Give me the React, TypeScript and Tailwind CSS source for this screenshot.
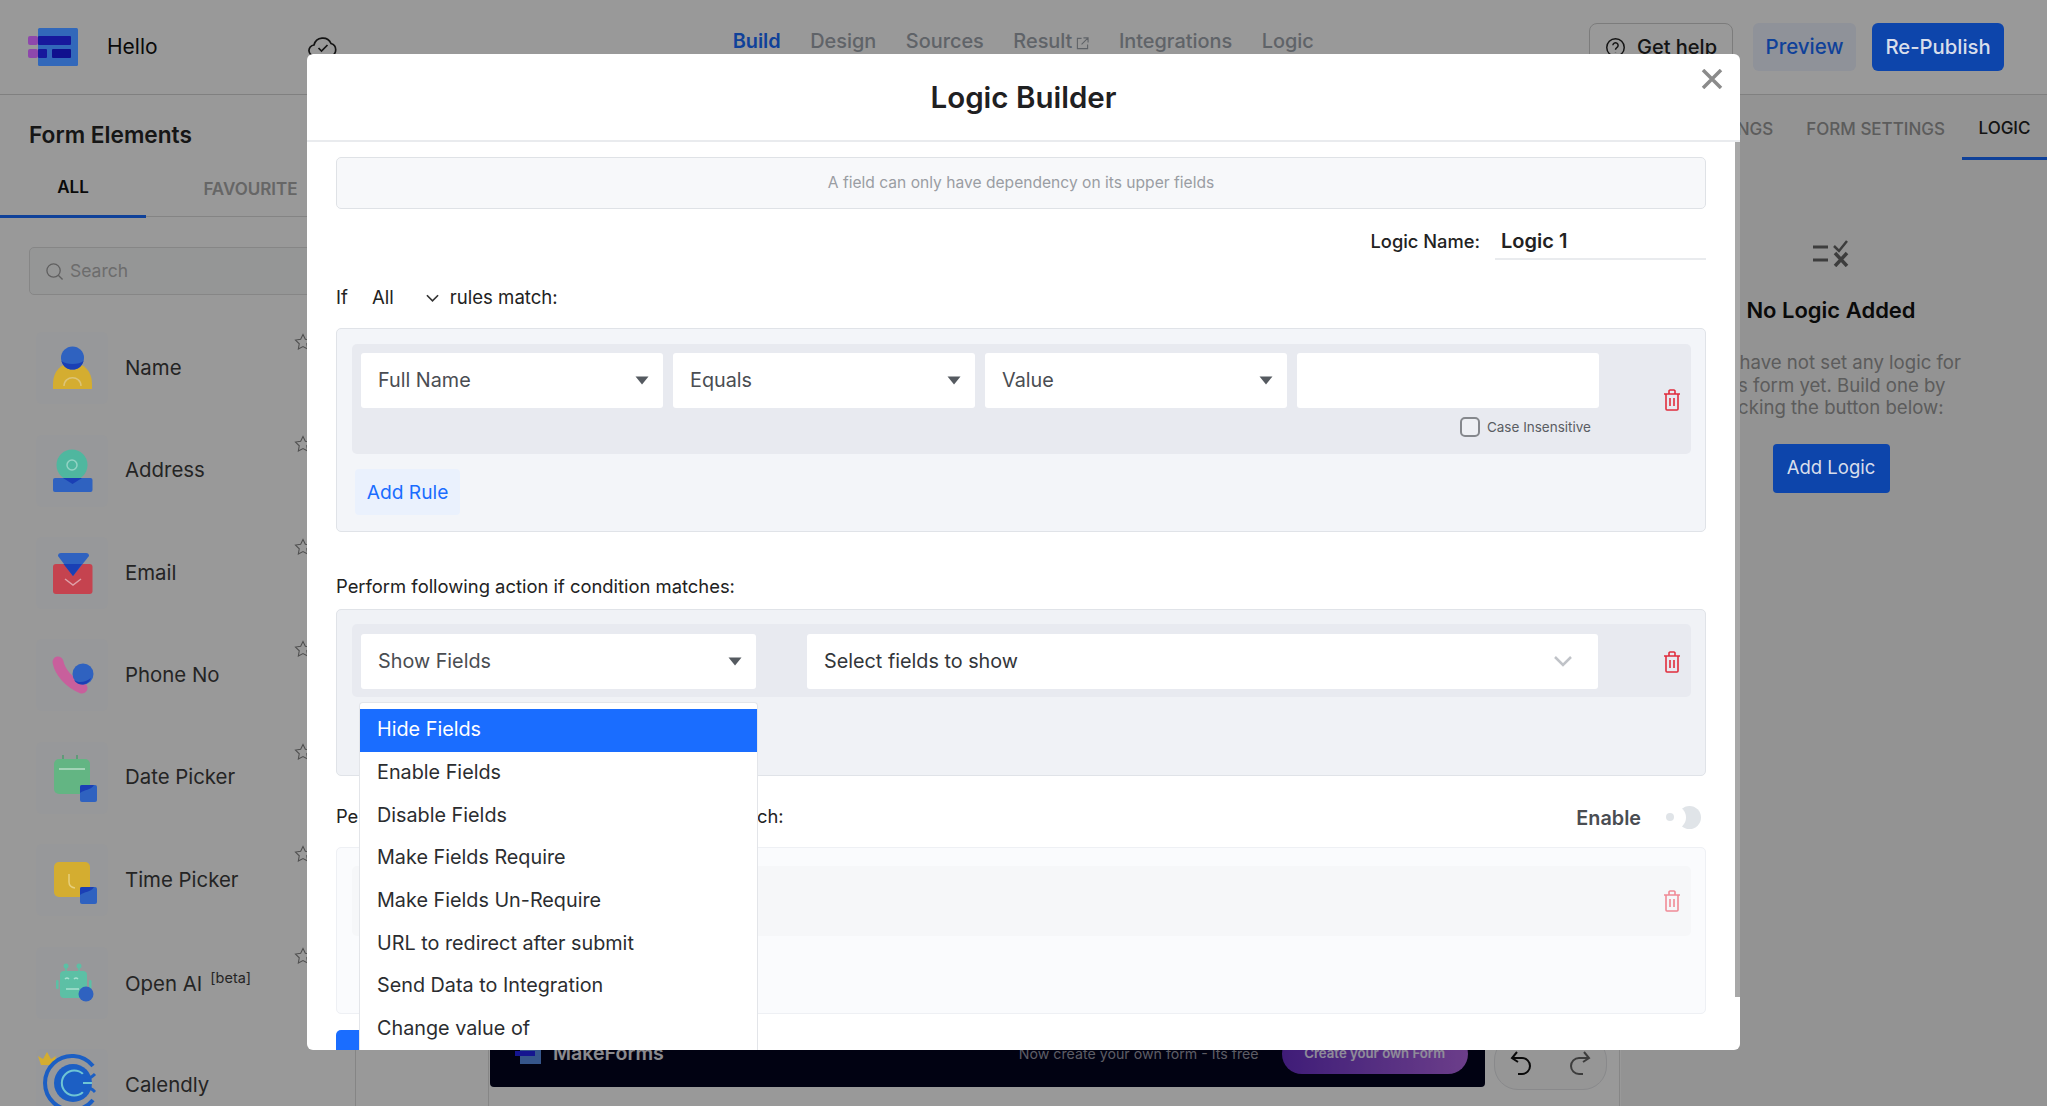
import React from "react";

const Trash = ({ className = "" }: { className?: string }) => (
  <svg viewBox="0 0 18 22" width="18" height="22" fill="none" stroke="currentColor" strokeWidth="1.6" className={className}>
    <path d="M1 5h16M6 5V2.5A1.2 1.2 0 0 1 7.2 1h3.6A1.2 1.2 0 0 1 12 2.500V5M3 5v15a1 1 0 0 0 1 1h10a1 1 0 0 0 1-1V5M7 9v8M11 9v8" />
  </svg>
);

const Caret = () => (
  <svg viewBox="0 0 14 9" width="14" height="9" className="shrink-0 text-[#555a60]" fill="currentColor">
    <path d="M0.5 0.5h13L7 8.500z" />
  </svg>
);

const Select = ({ label, className = "" }: { label: string; className?: string }) => (
  <div className={`h-[55px] bg-white rounded-[3px] flex items-center justify-between pl-[17px] pr-[14px] text-[19.800px] text-[#4a4d52] ${className}`}>
    <span>{label}</span>
    <Caret />
  </div>
);

const Star = () => (
  <svg viewBox="0 0 24 24" width="20" height="20" fill="none" stroke="#858585" strokeWidth="1.300" className="absolute left-[293px] top-[15px]">
    <path d="M12 3l2.800 5.800 6.200.9-4.500 4.400 1.100 6.300L12 17.400l-5.600 3 1.100-6.300L3 9.700l6.200-.9z" />
  </svg>
);

const B = "#2f62c0";
const D = "#1a3fb5";

const iconName = (
  <>
    <path d="M17 57v-5c0-13 8-21 19.500-21S56 39 56 52v5z" fill="#d4ad30" />
    <path d="M28 54c0-11 17-11 17 0" stroke="#dcc478" strokeWidth="1.500" fill="none" />
    <circle cx="36.500" cy="26" r="11.500" fill={B} />
    <path d="M25.500 29c4 4 18 4 22 0-1.500 6-6 8.500-11 8.500s-9.500-2.500-11-8.500z" fill={D} />
  </>
);
const iconAddress = (
  <>
    <circle cx="36" cy="30" r="15.500" fill="#4fb79f" />
    <circle cx="36" cy="30" r="5" fill="none" stroke="#93d3c4" strokeWidth="1.500" />
    <rect x="17" y="43" width="39.500" height="14" rx="2" fill={B} />
    <path d="M27 43h19l-9.500 6z" fill={D} />
  </>
);
const iconEmail = (
  <>
    <rect x="17" y="27" width="39.500" height="30" rx="3" fill="#c5434f" />
    <path d="M22 19a3 3 0 0 1 3-3h25a3 3 0 0 1 3 3L37 39z" fill={B} />
    <path d="M27.500 27h18.500L37 39z" fill={D} />
    <path d="M29 42l8 6 8-6" stroke="#dfa0a8" strokeWidth="1.500" fill="none" />
  </>
);
const iconPhone = (
  <>
    <path d="M22 23c2 10 11 21 24 26" stroke="#c85f9c" strokeWidth="11" strokeLinecap="round" fill="none" />
    <circle cx="47" cy="35" r="10.500" fill={B} />
    <path d="M38 41c4 3 11 3 17-2-2 5-6 6.500-9 6.500s-6-1.500-8-4.500z" fill={D} />
  </>
);
const iconDate = (
  <>
    <path d="M27 13v4M41 13v4" stroke="#4f9a6e" strokeWidth="1.500" />
    <rect x="18" y="17" width="36" height="35" rx="5" fill="#63b583" />
    <path d="M23 27h26" stroke="#b8dec7" strokeWidth="1.500" />
    <rect x="44" y="43" width="17" height="17" rx="2" fill={B} />
    <path d="M44 51c5-4 10-2 14-8h-12a2 2 0 0 0-2 2z" fill={D} />
  </>
);
const iconTime = (
  <>
    <rect x="18" y="18" width="36" height="35" rx="5" fill="#d4ad30" />
    <path d="M33 30v8q0 5 6 6" stroke="#e6cf7d" strokeWidth="1.500" fill="none" />
    <rect x="44" y="43" width="17" height="17" rx="2" fill={B} />
    <path d="M44 51c5-4 10-2 14-8h-12a2 2 0 0 0-2 2z" fill={D} />
  </>
);
const iconAI = (
  <>
    <circle cx="30" cy="19" r="2.500" fill="#5cc0a5" />
    <circle cx="43" cy="19" r="2.500" fill="#5cc0a5" />
    <path d="M30 19v6M43 19v6" stroke="#5cc0a5" strokeWidth="1.500" />
    <rect x="24" y="24" width="27" height="27" rx="4" fill="#5cc0a5" />
    <rect x="20" y="33" width="2.500" height="9" rx="1.200" fill="#5cc0a5" />
    <rect x="53" y="33" width="2.500" height="9" rx="1.200" fill="#5cc0a5" />
    <path d="M29 32q2-2 4 0M38 32q2-2 4 0M30 42h13" stroke="#a8dfd0" strokeWidth="1.500" fill="none" />
    <circle cx="50" cy="47" r="7.500" fill={B} />
  </>
);
const iconCalendly = (
  <>
    <path d="M2 7l5 3 4-7 4 7 5-3-2 9H5z" fill="#d4ad30" />
    <path d="M57 17A27 27 0 1 0 57 51" fill="none" stroke="#1c5fc4" strokeWidth="4" />
    <circle cx="37" cy="34" r="19" fill="#1c5fc4" />
    <path d="M47 25a12.500 12.500 0 1 0 0 18" fill="none" stroke="#6fc5d4" strokeWidth="2" />
    <path d="M47 25c3 5 6 6 12 0M47 43c3-5 6-6 12 0" fill="none" stroke="#1c5fc4" strokeWidth="3" />
    <path d="M47 34h9" stroke="#6fc5d4" strokeWidth="2" />
  </>
);

const items: [string, React.ReactNode, boolean?, boolean?][] = [
  ["Name", iconName],
  ["Address", iconAddress],
  ["Email", iconEmail],
  ["Phone No", iconPhone],
  ["Date Picker", iconDate],
  ["Time Picker", iconTime],
  ["Open AI", iconAI, true],
  ["Calendly", iconCalendly, false, true],
];

const menu = [
  "Hide Fields",
  "Enable Fields",
  "Disable Fields",
  "Make Fields Require",
  "Make Fields Un-Require",
  "URL to redirect after submit",
  "Send Data to Integration",
  "Change value of",
];

const Logo = () => (
  <svg viewBox="0 0 50 38" width="50" height="38" className="relative z-10">
    <rect x="10" y="0" width="40" height="38" rx="1.500" fill="#3268ba" />
    <rect x="0" y="8" width="10" height="9" rx="2" fill="#8e47ac" />
    <rect x="0" y="21" width="10" height="9" rx="2" fill="#8e47ac" />
    <rect x="10" y="8" width="33" height="9" rx="1" fill="#17189c" />
    <rect x="10" y="21" width="9" height="9" rx="1" fill="#17189c" />
    <rect x="24" y="21" width="19" height="9" rx="1" fill="#10108e" />
  </svg>
);

export default function App() {
  return (
    <div className="relative w-[2047px] h-[1106px] overflow-hidden bg-white flex flex-col [font-family:Inter,sans-serif]">
      {/* page header */}
      <header className="h-[95px] shrink-0 border-b border-[#d5d5d5] flex items-center">
        <div className="ml-[28px]"><Logo /></div>
        <span className="ml-[29px] text-[21px] text-[#111]">Hello</span>
        <svg viewBox="0 0 30 26" width="30" height="26" fill="none" stroke="#222" strokeWidth="1.700" className="ml-[150px]">
          <path d="M7 22a5.500 5.500 0 0 1-1-11A9 9 0 0 1 23 9.500a6.500 6.500 0 0 1 0 12.500z" />
          <path d="M10.500 14l3 3 6-6" />
        </svg>
        <nav className="ml-[395px] mb-[10px] flex items-center gap-[29.500px] text-[19.900px] font-medium text-[#9fa5ad]">
          <span className="text-[#1a6dff] font-semibold">Build</span>
          <span>Design</span>
          <span>Sources</span>
          <span className="flex items-center">
            Result
            <svg viewBox="0 0 14 14" width="13" height="13" fill="none" stroke="currentColor" strokeWidth="1.200" className="ml-[4px] mt-[3px]">
              <path d="M6 1.500H1.500v11h11V8M8 1h5v5M13 1L6 8" />
            </svg>
          </span>
          <span>Integrations</span>
          <span>Logic</span>
        </nav>
        <div className="ml-auto mr-[43px] flex items-center gap-[16px]">
          <div className="mr-[4px] w-[144px] h-[48px] rounded-[8px] border border-[#cfcfcf] flex items-center justify-center gap-[11px] text-[20px] font-medium text-[#222]">
            <svg viewBox="0 0 24 24" width="21" height="21" fill="none" stroke="#222" strokeWidth="1.700">
              <circle cx="12" cy="12" r="10" />
              <path d="M9 9.500a3 3 0 1 1 4.500 2.600c-1 .6-1.500 1.200-1.500 2.400M12 17.500v.1" />
            </svg>
            Get help
          </div>
          <div className="w-[103px] h-[48px] rounded-[6px] bg-[#eef3ff] flex items-center justify-center text-[20.500px] font-medium text-[#1a6dff]">Preview</div>
          <div className="relative z-10 w-[132px] h-[48px] rounded-[6px] bg-[#0d45ab] flex items-center justify-center text-[20.300px] font-medium text-[#d8deeb]">Re-Publish</div>
        </div>
      </header>

      <div className="flex-1 flex min-h-0">
        {/* sidebar */}
        <aside className="w-[356px] shrink-0 border-r border-[#dedede] flex flex-col">
          <h2 className="pl-[29px] pt-[25px] h-[68px] shrink-0 text-[22.700px] font-semibold text-[#262626] leading-[30px]">Form Elements</h2>
          <div className="h-[54px] shrink-0 flex border-b border-[#dcdcdc] text-[17px] font-semibold">
            <div className="w-[146px] border-b-[3px] border-[#1a6dff] flex items-center justify-center pb-[2px] text-[#111] h-[55px]">ALL</div>
            <div className="flex-1 flex items-center justify-center pb-[2px] text-[#aaa] h-[55px]">FAVOURITE</div>
          </div>
          <div className="mx-[29px] mt-[30px] h-[48px] shrink-0 rounded-[5px] border border-[#e0e0e0] bg-[#f9fafb] flex items-center pl-[15px] gap-[6px] text-[17.500px] text-[#b5b5b5]">
            <svg viewBox="0 0 20 20" width="19" height="19" fill="none" stroke="#a0a0a0" strokeWidth="1.400">
              <circle cx="9" cy="9" r="7" />
              <path d="M14 14l4.500 4.500" />
            </svg>
            Search
          </div>
          <ul className="mt-[22px] flex flex-col">
            {items.map(([label, icon, beta, noStar]) => (
              <li key={label} className="relative h-[102.400px] shrink-0 flex items-center pl-[36px] gap-[17px] text-[20.400px] text-[#3d3d3d]">
                <svg viewBox="0 0 72 72" width="72" height="72" className="relative z-10 shrink-0 bg-[#97989a] rounded-[6px] overflow-visible">{icon}</svg>
                <span className={beta ? "mt-[3px]" : ""}>
                  {label}
                  {beta && <sup className="ml-[8px] text-[14.500px] top-[-8px]">[beta]</sup>}
                </span>
                {!noStar && <Star />}
              </li>
            ))}
          </ul>
        </aside>

        {/* canvas */}
        <main className="flex-1 min-w-0 pl-[132px]">
          <div className="h-full w-[1132px] border-x border-[#dfdfdf] flex flex-col justify-end pb-[19px]">
            <div className="flex items-end">
              <div className="ml-[1px] w-[995px] h-[66px] bg-[#03041f] rounded-b-[4px] flex items-center pl-[25px] text-white">
                <svg viewBox="0 0 26 20" width="26" height="20">
                  <rect x="5" width="21" height="20" fill="#5a8fe8" />
                  <rect y="7" width="20" height="5" fill="#2424f0" />
                </svg>
                <span className="ml-[12px] text-[19.600px] font-semibold text-[#e8e8ee]">MakeForms</span>
                <span className="ml-[355px] text-[14.200px] text-[#9a9aa8]">Now create your own form - Its free</span>
                <div className="ml-[23px] w-[186px] h-[40px] rounded-[20px] bg-linear-to-r from-[#6a2fc8] to-[#b467e6] flex items-center justify-center text-[13.200px] font-semibold text-[#efeaff]">Create your own Form</div>
              </div>
              <div className="ml-[9px] w-[113px] h-[54px] mb-[-3px] rounded-[24px] border border-[#e4e5e8] bg-[#fafafa] flex items-center justify-between px-[15px]">
                <svg viewBox="0 0 24 28" width="24" height="28" fill="none" stroke="#111" strokeWidth="2">
                  <path d="M7 3L2 9l6 4M2 9h10a8 8 0 0 1 0 16H8" />
                </svg>
                <svg viewBox="0 0 24 28" width="24" height="28" fill="none" stroke="#666" strokeWidth="2">
                  <path d="M17 3l5 6-6 4M22 9H12a8 8 0 0 0 0 16h4" />
                </svg>
              </div>
            </div>
          </div>
        </main>

        {/* right panel */}
        <aside className="w-[426px] shrink-0 bg-[#f5f5f5] flex flex-col items-center">
          <div className="w-full h-[65px] shrink-0 flex justify-end text-[17px] font-medium text-[#999]">
            <div className="h-full flex items-center pt-[5px] pr-[33px]">FIELD SETTINGS</div>
            <div className="h-full flex items-center pt-[5px] pr-[17px]">FORM SETTINGS</div>
            <div className="h-full w-[85px] flex items-center justify-center pt-[5px] border-b-[3px] border-[#1a6dff] text-[#222]">LOGIC</div>
          </div>
          <svg viewBox="0 0 36 27" width="36" height="27" fill="none" stroke="#666" strokeWidth="3" className="mt-[80px] mr-[6px]">
            <path d="M0 7h15M0 20h15" />
            <path d="M21 6l5 5 8-10" strokeWidth="2.500" />
            <path d="M22 13l12 13M34 13L22 26" strokeWidth="3.500" />
          </svg>
          <h3 className="mt-[29px] mr-[6px] text-[22px] font-semibold text-[#111] leading-[28px]">No Logic Added</h3>
          <p className="mt-[27px] mr-[6px] text-center text-[18.600px] leading-[22.500px] text-[#999]">
            You have not set any logic for<br />this form yet. Build one by<br />clicking the button below:
          </p>
          <div className="relative z-10 mt-[25px] mr-[6px] w-[117px] h-[49px] rounded-[4px] bg-[#0d45ab] text-[#d8deeb] text-[18.500px] flex items-center justify-center">Add Logic</div>
        </aside>
      </div>

      {/* dim overlay */}
      <div className="absolute inset-0 z-[5] bg-black/40" />

      {/* modal */}
      <section className="absolute z-20 left-[307px] top-[54px] w-[1433px] h-[996px] bg-white rounded-[6px] overflow-hidden flex flex-col">
        <div className="relative h-[88px] shrink-0 border-b-2 border-[#e9ebee] flex items-center justify-center">
          <h1 className="text-[29.500px] font-semibold text-[#1f2022]">Logic Builder</h1>
          <svg viewBox="0 0 22 20" width="22" height="20" stroke="#8b8b8b" strokeWidth="3.500" className="absolute right-[17px] top-[15px]">
            <path d="M2 1l18 18M20 1L2 19" />
          </svg>
        </div>

        <div className="relative flex-1 min-h-0 px-[29px] pt-[15px] overflow-hidden">
          <div className="absolute right-0 top-0 w-[5px] h-[855px] bg-[#a8a8a8]" />

          <div className="h-[52px] w-[1370px] rounded-[5px] border border-[#dfe2e6] bg-[#f7f8fa] flex items-center justify-center text-[15.600px] text-[#9a9da3]">
            A field can only have dependency on its upper fields
          </div>

          <div className="mt-[13px] h-[38px] w-[1370px] flex justify-end items-center text-[18.300px]">
            <span className="text-[#222] mr-[15px] font-medium pt-[2px]">Logic Name:</span>
            <span className="w-[211px] h-full flex items-center border-b-2 border-[#e9ebee] pl-[6px] pt-[2px] text-[20px] font-semibold text-[#222]">Logic 1</span>
          </div>

          <div className="mt-[22px] h-[30px] pt-[2px] flex items-center text-[18.600px] text-[#222]">
            <span>If</span>
            <span className="ml-[24px]">All</span>
            <svg viewBox="0 0 14 9" width="13" height="9" fill="none" stroke="#333" strokeWidth="1.800" className="ml-[32px]"><path d="M1 1l6 6 6-6" /></svg>
            <span className="ml-[11px]">rules match:</span>
          </div>

          <div className="mt-[16px] w-[1370px] h-[204px] rounded-[5px] border border-[#e0e3e8] bg-[#f3f5f9] pl-[15px] pr-[14px] pt-[15px]">
            <div className="relative h-[110px] rounded-[5px] bg-[#e8eaf0] flex gap-[10px] pl-[9px] pt-[9px]">
              <Select label="Full Name" className="w-[302px]" />
              <Select label="Equals" className="w-[302px]" />
              <Select label="Value" className="w-[302px]" />
              <div className="w-[302px] h-[55px] bg-white rounded-[3px]" />
              <div className="absolute right-[100px] top-[73px] flex items-center gap-[7px] text-[13.500px] text-[#5a5d63]">
                <span className="w-[20px] h-[20px] rounded-[5px] border-2 border-[#85888d] bg-[#eef0f4]" />
                Case Insensitive
              </div>
              <Trash className="absolute right-[10px] top-[45px] text-[#e02d3c]" />
            </div>
            <div className="mt-[15px] ml-[3px] w-[105px] h-[46px] rounded-[4px] bg-[#eaf1fd] flex items-center justify-center text-[19.200px] text-[#1a6dff]">Add Rule</div>
          </div>

          <div className="mt-[41px] h-[27px] flex items-center text-[18.400px] text-[#222]">Perform following action if condition matches:</div>

          <div className="mt-[9px] w-[1370px] h-[167px] rounded-[5px] border border-[#e0e3e8] bg-[#f0f2f6] pl-[15px] pr-[14px] pt-[14px]">
            <div className="relative h-[73px] rounded-[5px] bg-[#e8eaf0] flex pl-[9px] pt-[10px]">
              <Select label="Show Fields" className="w-[395px]" />
              <div className="ml-[51px] w-[791px] h-[55px] bg-white rounded-[3px] flex items-center justify-between pl-[17px] pr-[26px] text-[19.800px] text-[#33363a]">
                Select fields to show
                <svg viewBox="0 0 18 11" width="18" height="11" fill="none" stroke="#c0c3c8" strokeWidth="2.500"><path d="M1 1l8 8 8-8" /></svg>
              </div>
              <Trash className="absolute right-[10px] top-[27px] text-[#e02d3c]" />
            </div>
          </div>

          <div className="mt-[23px] h-[38px] w-[1370px] flex items-center justify-between text-[18.350px] text-[#222]">
            <span className="-mt-[3px]">Perform following action if condition doesn't match:</span>
            <div className="flex items-center">
              <span className="font-semibold text-[19.800px] text-[#4a4d52] mr-[25px] mt-[1px]">Enable</span>
              <span className="relative w-[35px] h-[23px] mr-[5px] -mt-[2px]">
                <span className="absolute right-0 top-0 w-[23px] h-[23px] rounded-full bg-[#e0e4e8]" />
                <span className="absolute right-[15px] top-0 w-[23px] h-[23px] rounded-full bg-white" />
                <span className="absolute left-[0px] top-[7px] w-[8px] h-[8px] rounded-full bg-[#e0e4e8]" />
              </span>
            </div>
          </div>

          <div className="mt-[10px] w-[1370px] h-[167px] rounded-[5px] border border-[#eef0f4] bg-[#fafbfd] pl-[15px] pr-[14px] pt-[18px]">
            <div className="relative h-[70px] rounded-[5px] bg-[#f6f7f9]">
              <Trash className="absolute right-[10px] top-[24px] text-[#f08a96]" />
            </div>
          </div>

          <div className="mt-[16px] w-[130px] h-[50px] rounded-[5px] bg-[#1a6dff]" />

          {/* open dropdown */}
          <ul className="absolute left-[52px] top-[560px] w-[399px] h-[360px] bg-white rounded-t-[4px] border-x border-t border-[#e3e5e9] pt-[6px] text-[19.800px] text-[#2b2d30]">
            {menu.map((m, i) => (
              <li key={m} className={`h-[42.670px] flex items-center pl-[17px] ${i === 0 ? "bg-[#1a6dff] text-white" : ""}`}>{m}</li>
            ))}
          </ul>
        </div>
      </section>
    </div>
  );
}
